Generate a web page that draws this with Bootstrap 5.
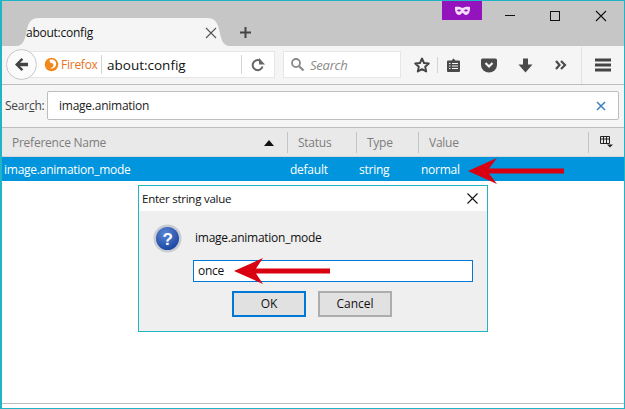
<!DOCTYPE html>
<html lang="en"><head><meta charset="utf-8"><title>about:config</title>
<link rel="stylesheet" href="https://cdn.jsdelivr.net/npm/bootstrap@5.3.0/dist/css/bootstrap.min.css">
<style>
html,body{margin:0;height:100%;overflow:hidden;background:#fff}
body{font-family:"Open Sans","Noto Sans","Liberation Sans",sans-serif;font-size:12px;color:#222;letter-spacing:-.25px}
.win{width:625px;height:409px;border:1px solid #1fb5c6;border-left-width:2px;position:relative;display:flex;flex-direction:column;background:#fff}
.titlebar{height:45px;background:#c6c6c6;display:flex;align-items:flex-start;flex:none;position:relative}
.tabshape{margin:17px 0 0 14px;width:214px;height:28px;position:relative;display:flex;align-items:center;padding:2px 13px 0 10px;justify-content:space-between;color:#111;font-size:12px;z-index:0}
.tabshape svg.bgtab{position:absolute;inset:0;z-index:-1}
.plus{margin:25px 0 0 9px}
.priv{position:absolute;left:440px;top:0;width:40px;height:19px;background:#9313bd;display:flex;align-items:center;justify-content:center}
.wbtns{position:absolute;top:8px;left:502px;width:120px;height:16px}
.wbtns svg{position:absolute;top:0}
.navrow{height:39px;background:#f5f5f5;border-bottom:1px solid #bcbcbc;flex:none;display:flex;align-items:center;position:relative}
.backb{width:31px;height:31px;border-radius:50%;background:#fbfbfb;border:1px solid #c8c8c8;position:absolute;left:4px;top:3px;display:flex;align-items:center;justify-content:center;z-index:2}
.urlbox{position:absolute;left:20px;top:5px;width:253px;height:27px;background:#fff;border:1px solid #e6e6e6;display:flex;align-items:center}
.fx{margin-left:22px;padding:1px 0 0 16px;width:56px;color:#e8731c;font-size:12px}
.sep{width:1px;height:19px;background:#d4d4d4}
.urltxt{font-size:13.500px;color:#111;padding:2px 0 0 5px;width:139px;letter-spacing:0}
.srchbox{position:absolute;left:281px;top:5px;width:118px;height:27px;background:#fff;border:1px solid #e6e6e6;display:flex;align-items:center;padding-left:6px;gap:5px;color:#8a8a8a;font-style:italic;font-size:13px}
.srchbox span{padding-top:2px}
.tb{position:absolute;top:0;height:38px;display:flex;align-items:center}
.filter{height:43px;background:#f5f5f5;flex:none;display:flex;align-items:center;border-bottom:1px solid #bcbcbc;padding-bottom:2px}
.filter label{width:45px;padding:1px 0 0 3px;color:#444;font-size:12px;margin:0}
.filterbox{width:572px;height:29px;background:#fff;border:1px solid #bdbdbd;border-radius:2px;display:flex;align-items:center;justify-content:space-between;padding:1px 12px 0 11px;color:#222;font-size:12px}
.cols{display:grid;grid-template-columns:286px 69px 62px 170px 34px}
.head{height:29px;background:#e9e9e9;flex:none;border-bottom:1px solid #d5d5d5;color:#7d7d7d;font-size:12px;align-items:center}
.head>div{height:21px;display:flex;align-items:center;padding:1px 0 0 10px;border-right:1px solid #c4c4c4;justify-content:space-between}
.head>div:last-child{border:0;justify-content:center;padding:0}
.selrow{height:24px;background:#0095dd;color:#fff;flex:none;align-items:center;font-size:12px;padding-top:1px}
.selrow>div{padding-left:2px}
.treebody{flex:1;background:#fff}
.foot{height:5px;border-top:1px solid #bcbcbc;flex:none;background:#fff}
.dlg{position:absolute;left:136px;top:184px;width:350px;height:147px;border:1px solid #1fb5c6;background:#efefef;display:flex;flex-direction:column;z-index:3}
.dlgtop{height:25px;background:#fff;display:flex;align-items:center;justify-content:space-between;padding:0 9px 0 3px;color:#111;font-size:11.500px;flex:none}
.dlgbody{position:relative;flex:1;display:flex;flex-direction:column}
.qrow{display:flex;align-items:center;gap:13px;margin:12px 0 0 14px;height:30px;color:#111;font-size:12px}
.dlginput{margin:7px 0 0 54px;width:280px;height:22px;background:#fff;border:1px solid #0078d7;padding-left:4px;line-height:20px;font-size:12px;color:#111}
.btnrow{display:flex;justify-content:center;gap:12px;margin-top:9px;padding-right:2px}
.wbtn{width:74px;height:26px;background:#e1e1e1;border:2px solid #adadad;border-radius:0;padding:0;font-size:12px;color:#111;line-height:20px}
.wbtn.act{border-color:#0078d7}
.arrow{position:absolute;z-index:5}
</style></head><body>
<div class="win">
 <div class="titlebar">
  <div class="tabshape">
   <svg class="bgtab" width="214" height="28" viewBox="0 0 214 28"><path d="M0 28C8 28 9 20 11 11 13 3 16 0 24 0H190C198 0 201 3 203 11 205 20 206 28 214 28Z" fill="#f5f5f5"/></svg>
   <span>about:config</span>
   <svg width="12" height="12" viewBox="0 0 12 12"><path d="M1 1l10 10M11 1L1 11" stroke="#555" stroke-width="1.100"/></svg>
  </div>
  <svg class="plus" width="13" height="13" viewBox="0 0 13 13"><path d="M6.500 1v11M1 6.500h11" stroke="#444" stroke-width="2"/></svg>
  <div class="priv"><svg width="17" height="10" viewBox="0 0 17 10"><path d="M1 1C4 .3 6 1 8.500 2 11 1 13 .3 16 1c.3 4-1 8-4 8-2 0-2.500-2-3.500-2S7 9 5 9C2 9 .7 5 1 1Z" fill="#f2dcfa"/><ellipse cx="5" cy="4.500" rx="1.800" ry="1" fill="#9313bd"/><ellipse cx="12" cy="4.500" rx="1.800" ry="1" fill="#9313bd"/></svg></div>
  <div class="wbtns">
   <svg style="left:0" width="12" height="14" viewBox="0 0 12 14"><path d="M1 6.500h10" stroke="#111"/></svg>
   <svg style="left:45px" width="12" height="14" viewBox="0 0 12 14"><rect x="1.500" y="2.500" width="9" height="9" fill="none" stroke="#111"/></svg>
   <svg style="left:91px" width="12" height="14" viewBox="0 0 12 14"><path d="M1 2l10 10M11 2L1 12" stroke="#111" stroke-width="1.100"/></svg>
  </div>
 </div>
 <div class="navrow">
  <div class="urlbox">
   <span class="fx">Firefox</span>
   <span class="sep"></span><span class="urltxt">about:config</span><span class="sep"></span>
   <svg style="margin-left:9px" width="14" height="14" viewBox="0 0 14 14"><path d="M11.500 8.500A5 5 0 1 1 9.500 3" fill="none" stroke="#666" stroke-width="2"/><path d="M8 0v6.500h6Z" fill="#666"/></svg>
  </div>
  <svg style="position:absolute;left:42px;top:11px;z-index:2" width="15" height="15" viewBox="0 0 15 15"><circle cx="7.500" cy="7.500" r="6.800" fill="#f08a1d"/><path d="M5.500 3C9 1.500 13 4 12 8c-.7 3-4 4-6 3 2 0 3.500-1 3.500-3 0-1.500-1.500-2-3-2C6 5 5.500 4 5.500 3Z" fill="#fff"/></svg>
  <div class="backb"><svg width="15" height="15" viewBox="0 0 15 15"><path d="M7.500 1 1 7.500 7.500 14l1.800-1.800L6 9.200h8V5.800H6l3.300-3Z" fill="#444"/></svg></div>
  <div class="srchbox"><svg width="15" height="15" viewBox="0 0 15 15"><circle cx="6" cy="6" r="4" fill="none" stroke="#8a8a8a" stroke-width="1.800"/><path d="M9 9l4.500 4.500" stroke="#8a8a8a" stroke-width="2.200"/></svg><span>Search</span></div>
  <div class="tb" style="left:412px"><svg width="16" height="16" viewBox="0 0 16 16"><path d="M8 1.500l2 4.500 4.800.5-3.600 3.200 1 4.800L8 12.100l-4.200 2.400 1-4.800L1.200 6.500 6 6Z" fill="none" stroke="#444" stroke-width="1.900" stroke-linejoin="round"/></svg></div>
  <div class="tb" style="left:435px"><span class="sep" style="height:16px"></span></div>
  <div class="tb" style="left:444px"><svg width="15" height="15" viewBox="0 0 15 15"><path d="M1 3.500Q1 2.500 2 2.500h3.500L7.500 .5l2 2H13Q14 2.500 14 3.500V13Q14 14 13 14H2Q1 14 1 13Z" fill="#4a4a4a"/><path d="M3 5.500h1.500M6 5.500h6M3 8h1.500M6 8h6M3 10.500h1.500M6 10.500h6" stroke="#f5f5f5" stroke-width="1.100"/></svg></div>
  <div class="tb" style="left:479px"><svg width="16" height="15" viewBox="0 0 16 15"><path d="M1.500.5h13Q16 .5 16 2v5A8 7.500 0 0 1 0 7V2Q0 .5 1.500.5Z" fill="#4a4a4a"/><path d="M4.500 5l3.500 3.500L11.500 5" fill="none" stroke="#f5f5f5" stroke-width="2.200"/></svg></div>
  <div class="tb" style="left:516px"><svg width="15" height="15" viewBox="0 0 15 15"><path d="M5 .5h5v6h4.500L7.500 14.500.5 6.500H5Z" fill="#4a4a4a"/></svg></div>
  <div class="tb" style="left:553px"><svg width="12" height="10" viewBox="0 0 12 10"><path d="M1 1l3.500 4L1 9M6 1l4 4-4 4" fill="none" stroke="#4a4a4a" stroke-width="2.200"/></svg></div>
  <div class="tb" style="left:579px"><span class="sep" style="height:37px;background:#e2e2e2"></span></div>
  <div class="tb" style="left:593px"><svg width="16" height="14" viewBox="0 0 16 14"><path d="M0 2h16M0 7h16M0 12h16" stroke="#444" stroke-width="2.800"/></svg></div>
 </div>
 <div class="filter">
  <label for="f1">Sear<u>c</u>h:</label>
  <div class="filterbox" id="f1"><span>image.animation</span><svg width="10" height="10" viewBox="0 0 10 10"><path d="M1 1l8 8M9 1L1 9" stroke="#3d7fb8" stroke-width="1.500"/></svg></div>
 </div>
 <div class="cols head">
  <div style="padding-right:13px"><span>Preference Name</span><svg width="10" height="6" viewBox="0 0 10 6"><path d="M5 0l5 6H0Z" fill="#111"/></svg></div>
  <div>Status</div><div>Type</div><div>Value</div>
  <div><svg width="13" height="12" viewBox="0 0 13 12"><path d="M.5.500h9v7h-9ZM.5 3h9M3.500.500v7M6.500.500v7" fill="none" stroke="#222"/><path d="M7 8.500h6L10 11.500Z" fill="#222"/></svg></div>
 </div>
 <div class="cols selrow">
  <div>image.animation_mode</div><div>default</div><div>string</div><div>normal</div><div></div>
 </div>
 <div class="treebody"></div>
 <div class="foot"></div>

 <svg class="arrow" style="left:464px;top:155px" width="100" height="30" viewBox="0 0 100 30"><path d="M2 15 31 2 23 12.500H98V17.500H23L31 28Z" fill="#d90012"/></svg>

 <div class="dlg">
  <div class="dlgtop"><span>Enter string value</span><svg width="11" height="11" viewBox="0 0 11 11"><path d="M.5.500l10 10M10.500.500l-10 10" stroke="#111" stroke-width="1.100"/></svg></div>
  <div class="dlgbody">
   <div class="qrow"><svg width="29" height="29" viewBox="0 0 29 29"><defs><radialGradient id="qg" cx=".4" cy=".3" r=".8"><stop offset="0" stop-color="#5b86d6"/><stop offset="1" stop-color="#143f9a"/></radialGradient></defs><circle cx="14.500" cy="14.500" r="14" fill="#c9ccd2"/><circle cx="14.500" cy="14.500" r="11.500" fill="url(#qg)"/><text x="14.500" y="20.500" text-anchor="middle" fill="#fff" font-family="Liberation Sans,sans-serif" font-weight="700" font-size="17">?</text></svg><span>image.animation_mode</span></div>
   <div class="dlginput">once</div>
   <div class="btnrow"><button class="wbtn act" type="button">OK</button><button class="wbtn" type="button">Cancel</button></div>
  </div>
 </div>
 <svg class="arrow" style="left:230px;top:255px" width="100" height="30" viewBox="0 0 100 30"><path d="M2 15 31 2 24 12.500H98V17.500H24L31 28Z" fill="#d90012"/></svg>
</div>
</body></html>
